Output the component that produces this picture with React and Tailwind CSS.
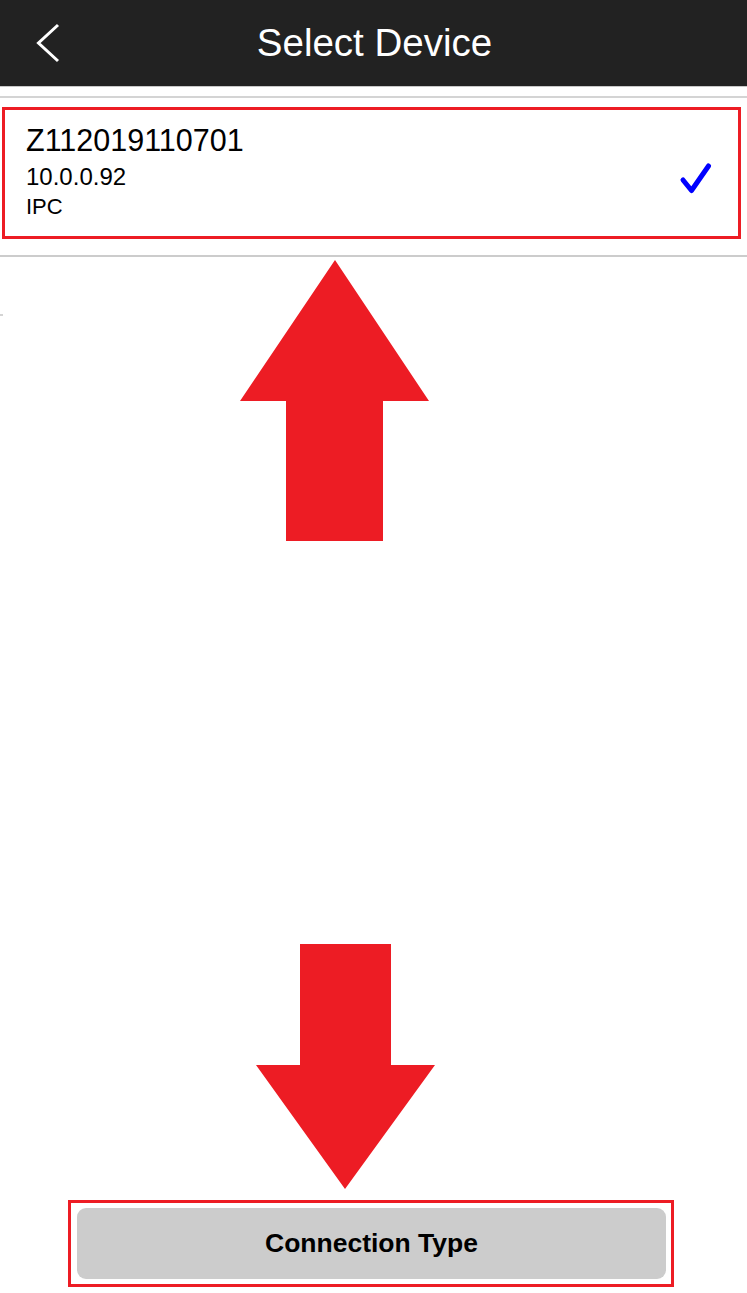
import React from "react";

export default function App() {
  return (
    <div
      className="relative flex h-[1293px] w-full flex-col bg-white"
      style={{ fontFamily: '"Liberation Sans", Arial, sans-serif' }}
    >
      {/* Header */}
      <div className="relative flex h-[86px] shrink-0 items-center justify-center bg-[#222222]">
        <svg
          className="absolute left-[34px] top-[22px]"
          width="28"
          height="42"
          viewBox="0 0 28 42"
          fill="none"
        >
          <path d="M24 3 L4.5 21 L24 39" stroke="#ffffff" strokeWidth="3" />
        </svg>
        <span className="pl-[2px] text-[38.5px] leading-none text-white">Select Device</span>
      </div>
      <div className="h-[1px] shrink-0 bg-[#c8c8c8]" />
      <div className="mt-[9px] h-[2px] shrink-0 bg-[#d4d4d4]" />

      {/* Device row */}
      <div className="ml-[2px] mr-[6px] mt-[9px] flex h-[132px] shrink-0 items-start border-[3px] border-[#ed1c24] pl-[21px] pr-[26px]">
        <div className="flex flex-1 flex-col pt-[15px] text-black">
          <span className="text-[30.5px] leading-[30px]">Z112019110701</span>
          <span className="mt-[10px] text-[24px] leading-[24px]">10.0.0.92</span>
          <span className="mt-[7px] text-[22px] leading-[22px]">IPC</span>
        </div>
        <svg className="mt-[52px]" width="34" height="34" viewBox="0 0 34 34" fill="none">
          <path
            d="M5 18 L13.5 28.5 L30.5 4"
            stroke="#0000ff"
            strokeWidth="5"
            strokeLinecap="round"
            strokeLinejoin="round"
          />
        </svg>
      </div>
      <div className="mt-[16px] h-[2px] shrink-0 bg-[#cccccc]" />
      <div className="mt-[57px] h-[2px] w-[3px] shrink-0 bg-[#d4d4d4]" />

      <div className="flex-1" />

      {/* Bottom button */}
      <div className="mb-[6px] ml-[68px] flex h-[87px] w-[606px] shrink-0 border-[3px] border-[#ed1c24] p-[5px] pl-[6px]">
        <div className="flex flex-1 items-center justify-center rounded-[9px] bg-[#cccccc]">
          <span className="text-[26.5px] font-bold leading-none text-black">Connection Type</span>
        </div>
      </div>

      {/* Annotation arrows */}
      <svg
        className="pointer-events-none absolute left-0 top-0"
        width="747"
        height="1293"
        viewBox="0 0 747 1293"
      >
        <polygon
          points="335,260 429,401 383,401 383,541 286,541 286,401 240,401"
          fill="#ed1c24"
        />
        <polygon
          points="300,944 391,944 391,1065 435,1065 345,1189 256,1065 300,1065"
          fill="#ed1c24"
        />
      </svg>
    </div>
  );
}
